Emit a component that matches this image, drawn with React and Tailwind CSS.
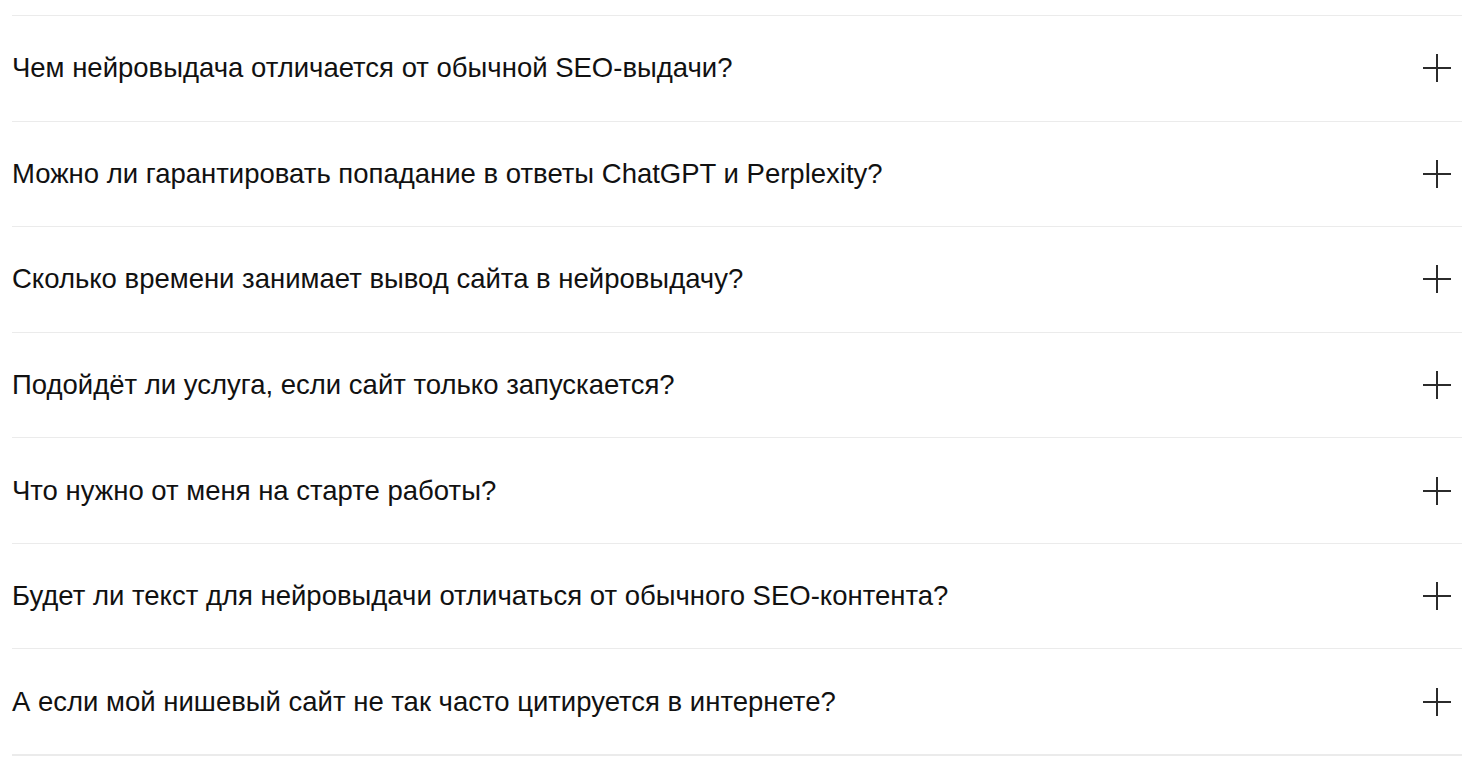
const questions = [
  "Чем нейровыдача отличается от обычной SEO-выдачи?",
  "Можно ли гарантировать попадание в ответы ChatGPT и Perplexity?",
  "Сколько времени занимает вывод сайта в нейровыдачу?",
  "Подойдёт ли услуга, если сайт только запускается?",
  "Что нужно от меня на старте работы?",
  "Будет ли текст для нейровыдачи отличаться от обычного SEO-контента?",
  "А если мой нишевый сайт не так часто цитируется в интернете?",
];

function PlusIcon() {
  return (
    <svg width="28" height="28" viewBox="0 0 28 28" fill="none">
      <path d="M14 0v28M0 14h28" stroke="#2b2b2b" strokeWidth="2" />
    </svg>
  );
}

export default function App() {
  return (
    <div className="min-h-screen bg-white pt-[15px] pl-[12px] pr-[11px] font-['Liberation_Sans',Arial,sans-serif]">
      <div className="border-b-2 border-[#ebebeb]">
        {questions.map((q, i) => (
          <button
            key={i}
            className="w-full h-[105.57px] flex items-center justify-between border-t border-[#ebebeb] pr-[11px] text-left"
          >
            <span className="text-[27.5px] leading-[32px] text-[#111]">{q}</span>
            <PlusIcon />
          </button>
        ))}
      </div>
    </div>
  );
}
